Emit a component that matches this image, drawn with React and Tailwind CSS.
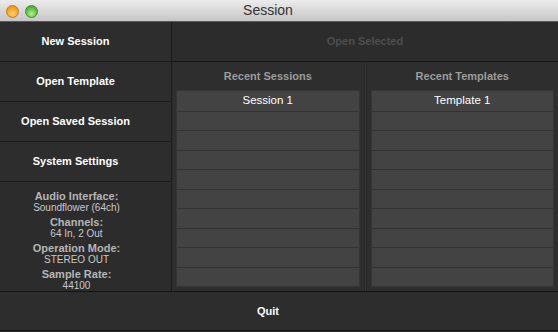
const menuButtons = ["New Session", "Open Template", "Open Saved Session", "System Settings"];

const info = [
  ["Audio Interface:", "Soundflower (64ch)"],
  ["Channels:", "64 In, 2 Out"],
  ["Operation Mode:", "STEREO OUT"],
  ["Sample Rate:", "44100"],
];

function ListColumn({ title, first }) {
  const rows = Array.from({ length: 10 }, (_, i) => (i === 0 ? first : ""));
  return (
    <div className="flex min-w-0 flex-1 flex-col">
      <div className="flex h-[29px] items-center justify-center text-[11px] font-bold text-[#9c9c9c]">
        {title}
      </div>
      <div className="mx-[5px] flex flex-col bg-[#434343] shadow-[0_0_0_1px_#353535]">
        {rows.map((label, i) => (
          <div
            key={i}
            className={`flex h-[19.5px] items-center justify-center text-[11.5px] text-white ${
              i > 0 ? "border-t border-[#323232]" : ""
            }`}
          >
            {label}
          </div>
        ))}
      </div>
    </div>
  );
}

export default function App() {
  return (
    <div
      className="flex h-[332px] w-[558px] flex-col overflow-hidden bg-[#2b2b2b]"
      style={{ fontFamily: '"Liberation Sans", Arial, sans-serif' }}
    >
      {/* title bar */}
      <div className="relative flex h-[22px] shrink-0 items-center justify-center border-b border-[#5a5a5a] bg-gradient-to-b from-[#ececec] to-[#c6c6c6] pr-[22px]">
        <div className="absolute left-[6px] top-[5px] flex gap-[6px]">
          <span className="h-[13px] w-[13px] rounded-full border border-[#c47a18] bg-[radial-gradient(circle_at_50%_70%,#ffd36b,#f29a1e_70%)]" />
          <span className="h-[13px] w-[13px] rounded-full border border-[#3f8f2a] bg-[radial-gradient(circle_at_50%_70%,#b5f08a,#4eb238_70%)]" />
        </div>
        <span className="text-[14px] text-[#333]">Session</span>
      </div>

      <div className="flex h-[269px] shrink-0">
        {/* left column */}
        <div className="flex w-[172px] shrink-0 flex-col border-r border-[#1c1c1c]">
          {menuButtons.map((label) => (
            <div
              key={label}
              className="flex h-[40px] items-center justify-center border-b border-[#1a1a1a] bg-[#2d2d2d] pr-[20px] text-[11px] font-bold text-white"
            >
              {label}
            </div>
          ))}
          <div className="flex flex-1 flex-col items-center gap-[4px] bg-[#2c2c2c] pr-[18px] pt-[9px]">
            {info.map(([k, v]) => (
              <div key={k} className="flex flex-col items-center leading-[11px]">
                <span className="text-[11px] font-bold text-[#b5b5b5]">{k}</span>
                <span className="text-[10px] text-[#c8c8c8]">{v}</span>
              </div>
            ))}
          </div>
        </div>

        {/* right side */}
        <div className="flex min-w-0 flex-1 flex-col">
          <div className="flex h-[40px] shrink-0 items-center justify-center border-b border-[#161616] bg-[#2c2c2c] text-[11px] font-bold text-[#4e4e4e]">
            Open Selected
          </div>
          <div className="flex flex-1 bg-[#2e2e2e]">
            <ListColumn title="Recent Sessions" first="Session 1" />
            <div className="w-[3px] shrink-0 border-x border-[#262626] bg-[#383838]" />
            <ListColumn title="Recent Templates" first="Template 1" />
          </div>
        </div>
      </div>

      {/* quit bar */}
      <div className="flex h-[40px] shrink-0 items-center justify-center border-y border-[#141414] bg-[#2d2d2d] pr-[22px] text-[11px] font-bold text-white">
        Quit
      </div>
    </div>
  );
}
